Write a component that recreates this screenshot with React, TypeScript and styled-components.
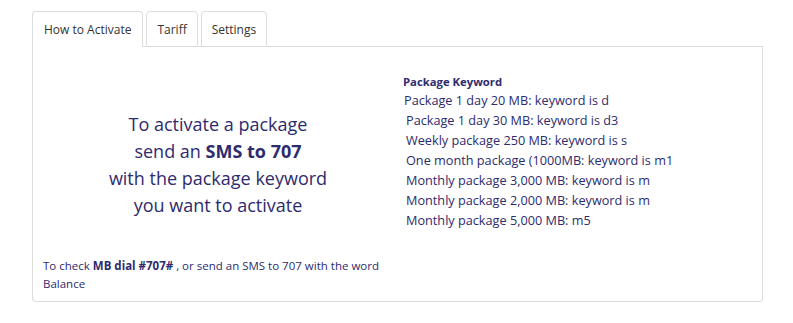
import * as React from "react"
import styled, { createGlobalStyle } from "styled-components"

const GlobalStyle = createGlobalStyle`
  body {
    margin: 0;
    background: #ffffff;
    font-family: "Open Sans", "DejaVu Sans", sans-serif;
  }
`

const Page = styled.div`
  padding: 11px 0 0 32px;
  width: 731px;
`

const TabList = styled.ul`
  display: flex;
  gap: 3px;
  margin: 0;
  padding: 0;
  list-style: none;
  border-bottom: 1px solid #dcdcdc;
`

const Tab = styled.li<{ $active?: boolean }>`
  margin-bottom: -1px;
  height: 34px;
  padding: 0 ${(p) => (p.$active ? 11 : 10)}px;
  display: flex;
  align-items: center;
  font-size: 12px;
  color: #333333;
  background: #ffffff;
  border: 1px solid #dcdcdc;
  border-bottom-color: ${(p) => (p.$active ? "#ffffff" : "#dcdcdc")};
  border-radius: 4px 4px 0 0;
`

const Panel = styled.div`
  display: grid;
  grid-template-columns: 370px 1fr;
  height: 254px;
  border: 1px solid #dcdcdc;
  border-top: none;
  border-radius: 0 0 4px 4px;
  color: #2e2b6e;
`

const LeftCol = styled.div`
  display: flex;
  flex-direction: column;
`

const Lead = styled.p`
  margin: 64px 0 0;
  text-align: center;
  font-size: 18px;
  line-height: 27px;
`

const Note = styled.p`
  margin: auto 0 8px;
  padding-left: 10px;
  font-size: 11.5px;
  line-height: 18px;
`

const RightCol = styled.div`
  padding-top: 27px;
`

const Heading = styled.div`
  font-size: 11.3px;
  font-weight: 700;
  line-height: 16px;
`

const KeywordLine = styled.div<{ $indent?: number }>`
  padding-left: ${(p) => p.$indent ?? 3}px;
  font-size: 12.7px;
  line-height: 20px;
`

const keywords = [
  { text: "Package 1 day 20 MB: keyword is d", indent: 1 },
  { text: "Package 1 day 30 MB: keyword is d3", indent: 3 },
  { text: "Weekly package 250 MB: keyword is s", indent: 3 },
  { text: "One month package (1000MB: keyword is m1", indent: 3 },
  { text: "Monthly package 3,000 MB: keyword is m", indent: 3 },
  { text: "Monthly package 2,000 MB: keyword is m", indent: 3 },
  { text: "Monthly package 5,000 MB: m5", indent: 3 },
]

export default function App() {
  return (
    <Page>
      <GlobalStyle />
      <TabList>
        <Tab $active>How to Activate</Tab>
        <Tab>Tariff</Tab>
        <Tab>Settings</Tab>
      </TabList>
      <Panel>
        <LeftCol>
          <Lead>
            To activate a package
            <br />
            send an <b>SMS to 707</b>
            <br />
            with the package keyword
            <br />
            you want to activate
          </Lead>
          <Note>
            To check <b>MB dial #707#</b> , or send an SMS to 707 with the word
            Balance
          </Note>
        </LeftCol>
        <RightCol>
          <Heading>Package Keyword</Heading>
          {keywords.map((k) => (
            <KeywordLine key={k.text} $indent={k.indent}>
              {k.text}
            </KeywordLine>
          ))}
        </RightCol>
      </Panel>
    </Page>
  )
}
